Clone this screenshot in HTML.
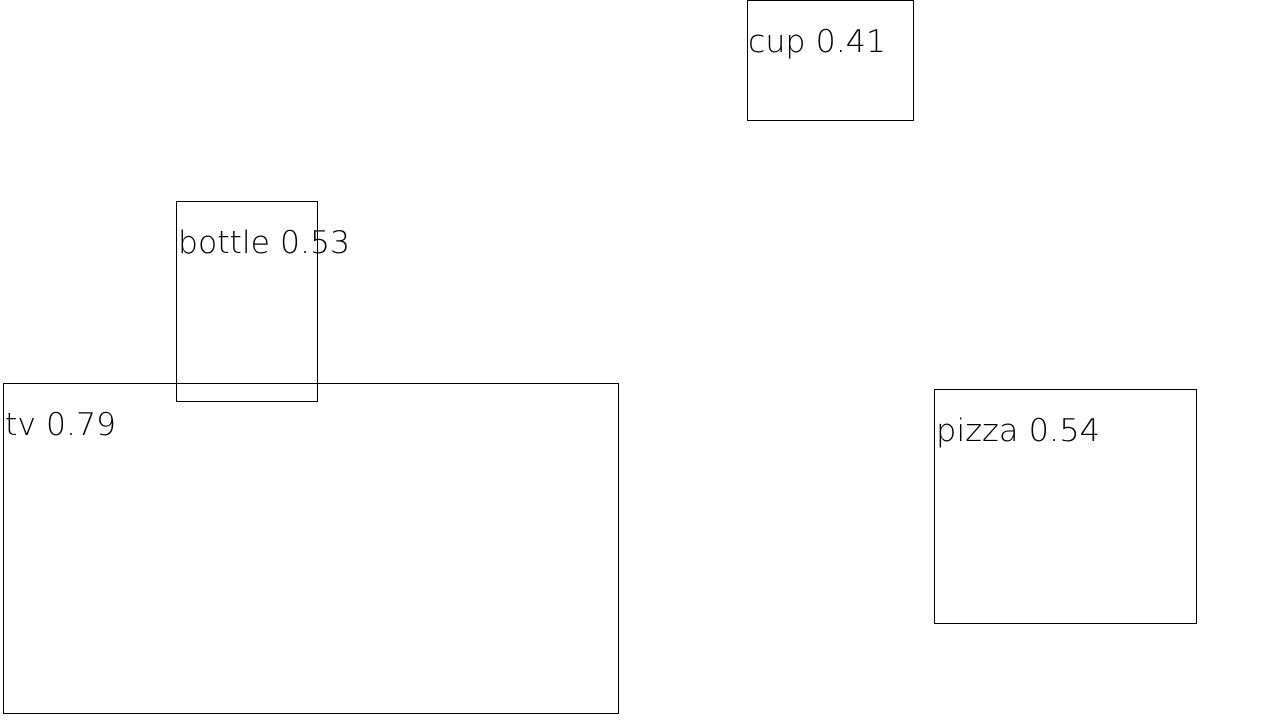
<!DOCTYPE html>
<html><head><meta charset="utf-8"><style>
html,body{margin:0;padding:0;background:#fff;width:1280px;height:720px;overflow:hidden}
text{font-family:"DejaVu Sans","Liberation Sans",sans-serif;font-weight:200;font-size:31px;fill:#000}
</style></head><body>
<svg width="1280" height="720" xmlns="http://www.w3.org/2000/svg">
<g fill="none" stroke="#000" stroke-width="1" shape-rendering="crispEdges">
<rect x="747.5" y="0.5" width="166" height="120"/>
<rect x="176.5" y="201.5" width="141" height="200"/>
<rect x="3.5" y="383.5" width="615" height="330"/>
<rect x="934.5" y="389.5" width="262" height="234"/>
</g>
<text x="748" y="52" textLength="138" lengthAdjust="spacingAndGlyphs">cup 0.41</text>
<text x="178" y="253" textLength="172" lengthAdjust="spacingAndGlyphs">bottle 0.53</text>
<text x="5" y="435" textLength="111" lengthAdjust="spacingAndGlyphs">tv 0.79</text>
<text x="936" y="441" textLength="164" lengthAdjust="spacingAndGlyphs">pizza 0.54</text>
</svg>
</body></html>
